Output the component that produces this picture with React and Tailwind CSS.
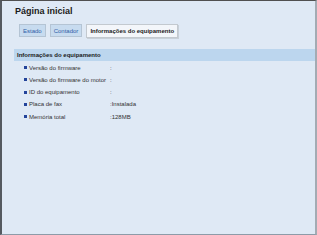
export default function App() {
  const rows = [
    ["Versão do firmware", ":"],
    ["Versão do firmware do motor", ":"],
    ["ID do equipamento", ":"],
    ["Placa de fax", ":Instalada"],
    ["Memória total", ":128MB"],
  ];
  return (
    <div
      className="w-[317px] h-[235px] bg-[#dfe9f5] border-t border-t-[#505050] border-l-2 border-l-[#555a60] border-r-2 border-r-[#a3abb3] border-b border-b-[#8d9ba8] overflow-hidden"
      style={{ fontFamily: '"Liberation Sans", Arial, sans-serif' }}
    >
      <div className="pl-[13px] pt-[4px] text-[9px] font-bold text-[#1a1a1a] leading-[12px]">Página inicial</div>
      <div className="flex items-start pl-[17px] mt-[7px] gap-[4px] h-[14px]">
        <div className="h-[13px] px-[3px] flex items-center bg-[#c7dbef] border border-[#b4c4d4] text-[6px] text-[#2e5da8] leading-none">Estado</div>
        <div className="h-[13px] px-[3px] flex items-center bg-[#c7dbef] border border-[#b4c4d4] text-[6px] text-[#2e5da8] leading-none">Contador</div>
        <div className="h-[14px] px-[3px] flex items-center bg-[#f3f6fa] border border-[#c3c9cf] shadow-[1px_1px_0_#c8d0d8] text-[6px] font-bold text-[#1a1a1a] leading-none">Informações do equipamento</div>
      </div>
      <div className="ml-[12px] mt-[11px] h-[12px] bg-[#bcd6ee] flex items-center pl-[3px] text-[6px] font-bold text-[#1a1a1a] leading-none">
        Informações do equipamento
      </div>
      <div className="mt-[0.5px] flex flex-col">
        {rows.map(([label, value]) => (
          <div key={label} className="h-[12.25px] flex items-center text-[6px] text-[#333] leading-none">
            <div className="ml-[22px] w-[3px] h-[3px] bg-[#23439a]" />
            <div className="ml-[2px] w-[81px]">{label}</div>
            <div>{value}</div>
          </div>
        ))}
      </div>
    </div>
  );
}
